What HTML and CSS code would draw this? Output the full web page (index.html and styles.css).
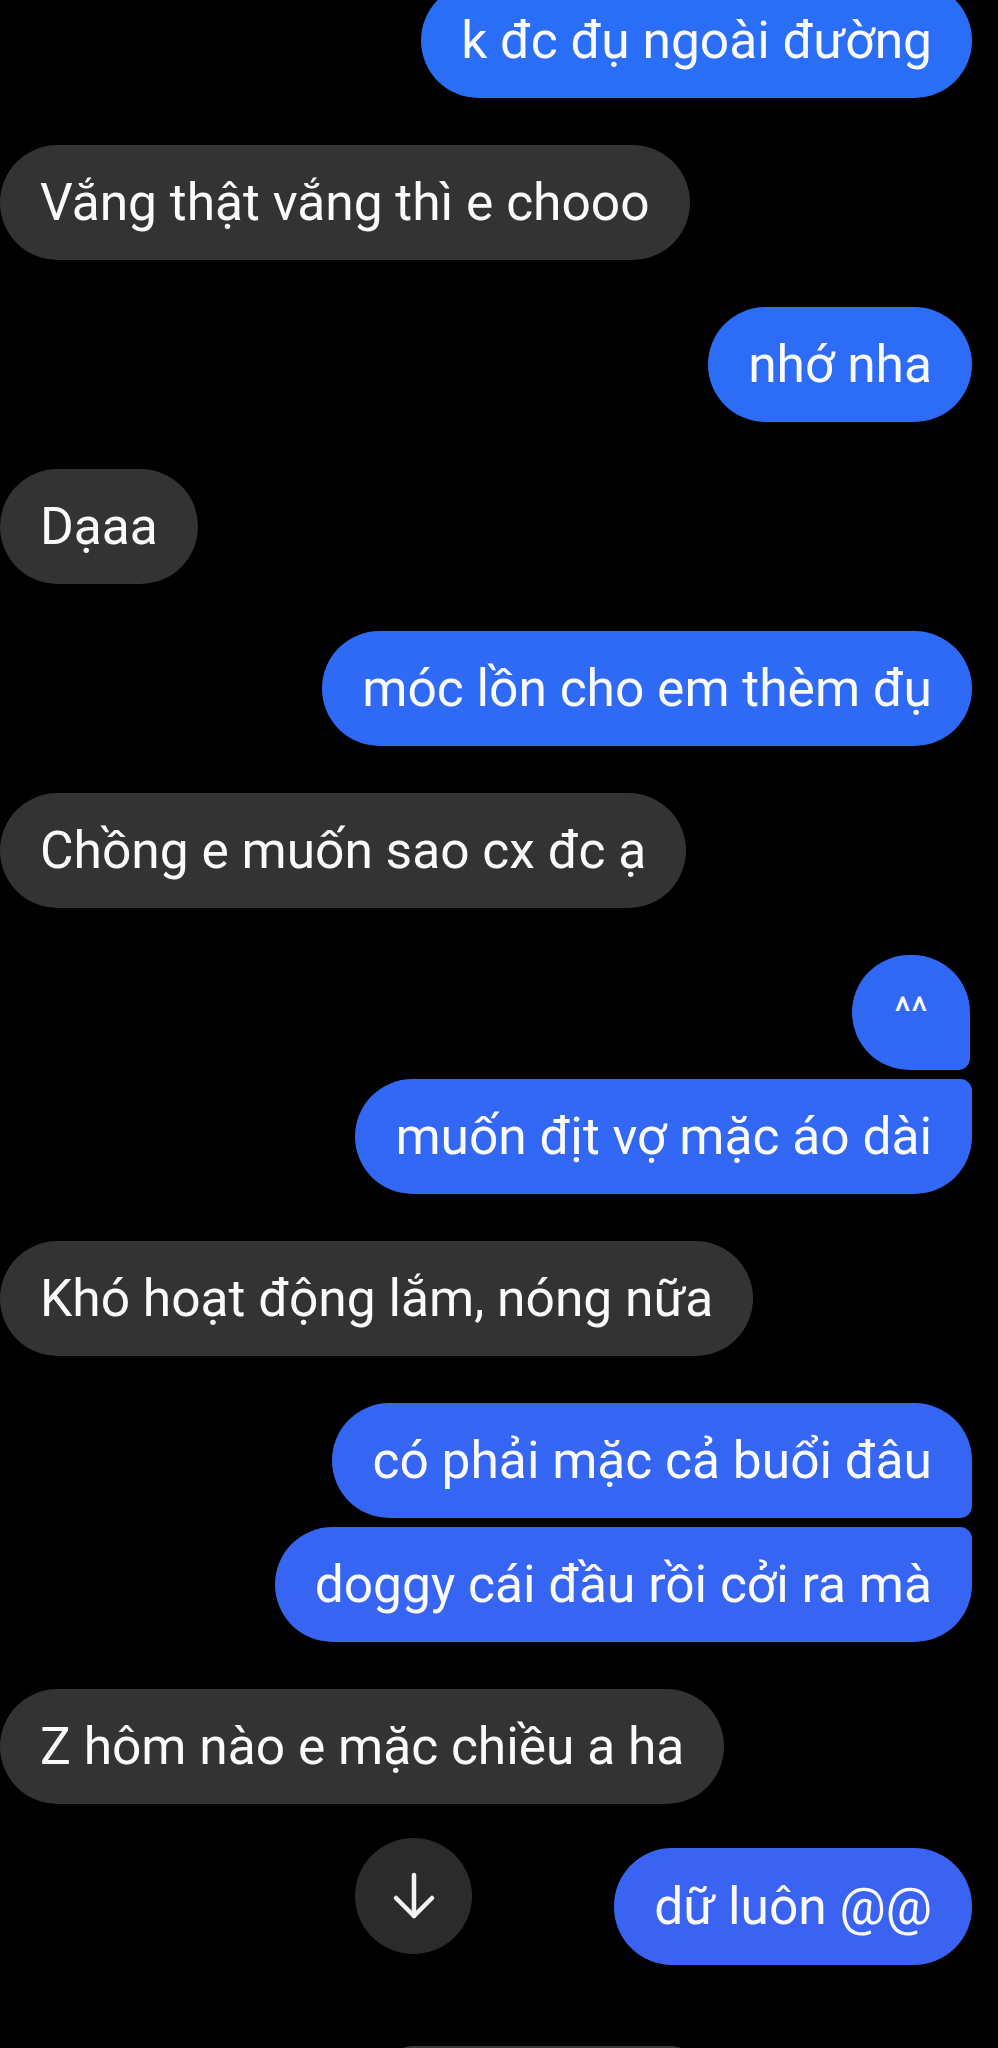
FILE: index.html
```html
<!DOCTYPE html>
<html lang="vi">
<head>
<meta charset="utf-8">
<title>Chat</title>
<link rel="stylesheet" href="styles.css">
</head>
<body>
<div class="chat">
  <div class="msg out first">k đc đụ ngoài đường</div>
  <div class="msg in">Vắng thật vắng thì e chooo</div>
  <div class="msg out">nhớ nha</div>
  <div class="msg in">Dạaa</div>
  <div class="msg out">móc lồn cho em thèm đụ</div>
  <div class="msg in">Chồng e muốn sao cx đc ạ</div>
  <div class="msg out group-top small">^^</div>
  <div class="msg out group-bottom grouped">muốn địt vợ mặc áo dài</div>
  <div class="msg in">Khó hoạt động lắm, nóng nữa</div>
  <div class="msg out group-top">có phải mặc cả buổi đâu</div>
  <div class="msg out group-bottom grouped">doggy cái đầu rồi cởi ra mà</div>
  <div class="msg in">Z hôm nào e mặc chiều a ha</div>
  <div class="msg out last">dữ luôn @@</div>
  <div class="bottom-bar"></div>
</div>
<button class="scroll-down" aria-label="Cuộn xuống">
  <svg width="44" height="48" viewBox="0 0 44 48" fill="none" stroke="#f2f2f2" stroke-width="4.5" stroke-linecap="round" stroke-linejoin="round">
    <path d="M22 3 V44"/>
    <path d="M4 26 L22 44 L40 26"/>
  </svg>
</button>
</body>
</html>
```

FILE: styles.css
```css
html, body {
  margin: 0;
  padding: 0;
  background: #000;
}

body {
  width: 998px;
  height: 2048px;
  overflow: hidden;
  position: relative;
  font-family: Roboto, "Noto Sans", "Liberation Sans", sans-serif;
}

.chat {
  display: flex;
  flex-direction: column;
  padding: 0 26px 0 0;
}

.msg {
  box-sizing: border-box;
  height: 115px;
  padding: 0 40px;
  border-radius: 58px;
  font-size: 51.5px;
  line-height: 115px;
  color: #fafafa;
  white-space: nowrap;
  margin-top: 47px;
}

.msg.in {
  align-self: flex-start;
  background: #333333;
}

.msg.out {
  align-self: flex-end;
  background: linear-gradient(to bottom, #2a6ef7 0px, #2f69f5 900px, #3c62f2 2048px);
  background-attachment: fixed;
}

.msg.first {
  margin-top: -17px;
}

.msg.grouped {
  margin-top: 9px;
}

.msg.group-top {
  border-bottom-right-radius: 12px;
}

.msg.group-bottom {
  border-top-right-radius: 12px;
}

.msg.small {
  width: 118px;
  padding: 0;
  text-align: center;
  font-size: 40px;
  margin-right: 2px;
}

.msg.last {
  margin-top: 44px;
  height: 117px;
  line-height: 117px;
}

.bottom-bar {
  margin-top: 81px;
  margin-left: 392px;
  width: 300px;
  height: 40px;
  border-radius: 20px 20px 0 0;
  background: #3a3a3a;
}

.scroll-down {
  position: absolute;
  left: 355px;
  top: 1838px;
  width: 117px;
  height: 116px;
  border: none;
  border-radius: 50%;
  background: #2b2b2b;
  display: flex;
  align-items: center;
  justify-content: center;
  padding: 0;
}
```
